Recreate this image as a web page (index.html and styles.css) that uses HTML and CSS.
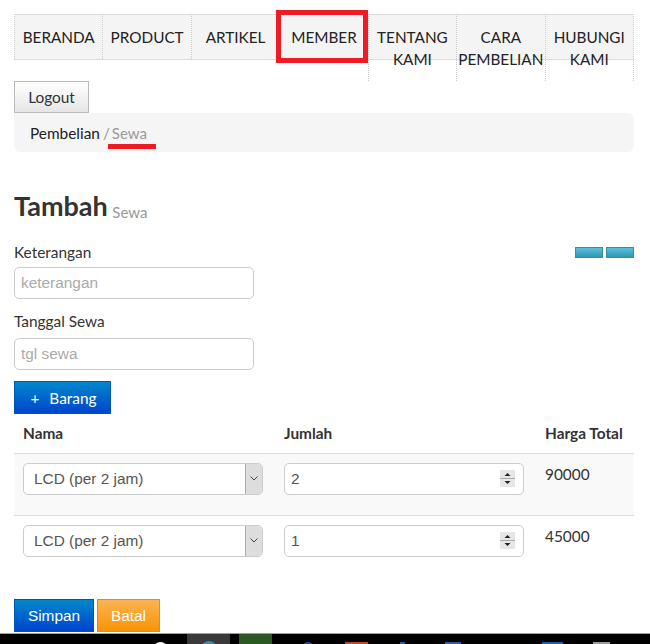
FILE: index.html
```html
<!DOCTYPE html>
<html lang="id">
<head>
    <meta charset="UTF-8">
    <meta name="viewport" content="width=device-width, initial-scale=1.0">
    <title>Tambah Sewa</title>
    <link rel="stylesheet" href="styles.css">
</head>
<body>

    <div class="page">
        <ul class="menu">
            <li><a href="#">BERANDA</a></li>
            <li><a href="#">PRODUCT</a></li>
            <li><a href="#">ARTIKEL</a></li>
            <li class="menu-marked"><a href="#">MEMBER</a></li>
            <li><a href="#">TENTANG KAMI</a></li>
            <li><a href="#">CARA PEMBELIAN</a></li>
            <li><a href="#">HUBUNGI KAMI</a></li>
        </ul>

        <button class="btn btn-logout">Logout</button>

        <div class="breadcrumb">
            <a href="#">Pembelian</a> <span class="divider">/</span> <span class="crumb-active">Sewa</span>
        </div>

        <h1>Tambah <small>Sewa</small></h1>

        <div class="form-top">
            <div class="fields">
                <label for="keterangan">Keterangan</label>
                <input class="text-input" id="keterangan" type="text" placeholder="keterangan">
                <label for="tgl">Tanggal Sewa</label>
                <input class="text-input" id="tgl" type="text" placeholder="tgl sewa">
            </div>
            <div class="mini-buttons">
                <button class="btn-mini"></button>
                <button class="btn-mini"></button>
            </div>
        </div>

        <button class="btn btn-blue btn-barang"><span class="plus">+</span> Barang</button>

        <table class="items">
            <thead>
                <tr>
                    <th class="col-nama">Nama</th>
                    <th class="col-jumlah">Jumlah</th>
                    <th>Harga Total</th>
                </tr>
            </thead>
            <tbody>
                <tr class="row-odd">
                    <td>
                        <div class="select-box">
                            <select><option>LCD (per 2 jam)</option></select>
                            <span class="select-arrow">
                                <svg width="8" height="5" viewBox="0 0 8 5"><path d="M0.5 0.5 L4 4 L7.5 0.5" fill="none" stroke="#444" stroke-width="1"/></svg>
                            </span>
                        </div>
                    </td>
                    <td>
                        <div class="number-box">
                            <input type="text" value="2">
                            <svg class="spin" width="15" height="17" viewBox="0 0 15 17">
                                <rect width="15" height="17" fill="#e6e6e6"/>
                                <rect y="8" width="15" height="1" fill="#aaa"/>
                                <path d="M7.5 3 L10.5 6 H4.5 Z M7.5 14 L10.5 11 H4.5 Z" fill="#222"/>
                            </svg>
                        </div>
                    </td>
                    <td class="total">90000</td>
                </tr>
                <tr>
                    <td>
                        <div class="select-box">
                            <select><option>LCD (per 2 jam)</option></select>
                            <span class="select-arrow">
                                <svg width="8" height="5" viewBox="0 0 8 5"><path d="M0.5 0.5 L4 4 L7.5 0.5" fill="none" stroke="#444" stroke-width="1"/></svg>
                            </span>
                        </div>
                    </td>
                    <td>
                        <div class="number-box">
                            <input type="text" value="1">
                            <svg class="spin" width="15" height="17" viewBox="0 0 15 17">
                                <rect width="15" height="17" fill="#e6e6e6"/>
                                <rect y="8" width="15" height="1" fill="#aaa"/>
                                <path d="M7.5 3 L10.5 6 H4.5 Z M7.5 14 L10.5 11 H4.5 Z" fill="#222"/>
                            </svg>
                        </div>
                    </td>
                    <td class="total">45000</td>
                </tr>
            </tbody>
        </table>

        <div class="actions">
            <button class="btn btn-blue btn-simpan">Simpan</button>
            <button class="btn btn-orange">Batal</button>
        </div>
    </div>

    <div class="taskbar">
        <span class="task task-white"></span>
        <span class="task task-grey"><i></i></span>
        <span class="task task-green"></span>
        <span class="task task-blue-1"></span>
        <span class="task task-red"></span>
        <span class="task task-blue-2"></span>
        <span class="task task-blue-3"></span>
        <span class="task task-blue-4"></span>
        <span class="task task-silver"></span>
    </div>

</body>
</html>
```

FILE: styles.css
```css
:root {
    --text-color: #333;
    --muted-color: #999;
    --line-color: #ddd;
    --input-border: #ccc;
    --mark-color: #ed1c24;
}

* {
    box-sizing: border-box;
}

html, body {
    height: 100%;
}

body {
    margin: 0;
    font-family: Lato, sans-serif;
    font-size: 15.4px;
    line-height: 22px;
    color: var(--text-color);
    background-color: #fff;
    overflow: hidden;
}

.page {
    height: 633px;
    padding: 14px 16px 0 14px;
}

/* menu */
.menu {
    list-style: none;
    margin: 0;
    padding: 0;
    display: flex;
    align-items: flex-start;
    height: 46px;
    background-color: #f4f4f4;
    border-top: 1px solid var(--line-color);
    border-bottom: 1px solid var(--line-color);
}

.menu li {
    position: relative;
    flex: 1 1 0;
    min-width: 0;
    margin-top: -1px;
    padding: 12px 0 11px;
    text-align: center;
    border-left: 1px dotted #ccc;
}

.menu li:last-child {
    border-right: 1px dotted #ccc;
}

.menu a {
    display: block;
    color: #222;
    font-size: 15.3px;
    text-decoration: none;
}

.menu-marked::after {
    content: "";
    position: absolute;
    left: -4px;
    right: 0;
    top: -4px;
    box-sizing: border-box;
    height: 53px;
    border: 5px solid var(--mark-color);
}

/* buttons */
.btn {
    display: block;
    height: 33px;
    padding: 0 13px;
    font-family: Lato, sans-serif;
    font-size: 15.4px;
    border: 1px solid #bbb;
    border-radius: 0;
    cursor: pointer;
}

.btn-logout {
    width: 75px;
    height: 32px;
    margin-top: 21px;
    color: #333;
    background: linear-gradient(#fff, #e6e6e6);
}

.btn-blue {
    color: #fff;
    border-color: #0055b0;
    background: linear-gradient(#0088cc, #0044cc);
}

.btn-orange {
    color: #fff;
    border-color: #e38d13;
    background: linear-gradient(#fbb450, #f89406);
    width: 63px;
}

.btn-barang {
    width: 97px;
    margin-top: 11px;
    padding: 0 12px 0 14px;
}

.plus {
    margin-right: 6px;
}

.btn-simpan {
    width: 80px;
}

.actions .btn {
    font-family: "Liberation Sans", Arial, sans-serif;
    padding: 0;
}

.btn-mini {
    display: block;
    width: 28px;
    height: 11px;
    padding: 0;
    border: 1px solid #3b8ba5;
    background: linear-gradient(#5bc0de, #2f96b4);
}

/* breadcrumb */
.breadcrumb {
    position: relative;
    height: 39px;
    padding: 9px 16px;
    background-color: #f5f5f5;
    border-radius: 0 6px 6px 6px;
}

.breadcrumb a {
    color: #222;
    text-decoration: none;
}

.divider,
.crumb-active {
    color: var(--muted-color);
}

.divider {
    margin: 0 -2px 0 -1px;
}

.crumb-active {
    font-size: 15px;
}

.crumb-active::after {
    content: "";
    position: absolute;
    left: 94px;
    top: 31px;
    width: 48px;
    height: 5px;
    background-color: var(--mark-color);
}

h1 {
    margin: 34px 0 0;
    font-size: 27px;
    line-height: 40px;
    font-weight: 700;
}

h1 small {
    margin-left: -2px;
    font-size: 15px;
    line-height: 1;
    font-weight: 400;
    color: var(--muted-color);
    vertical-align: -2px;
}

/* form */
.form-top {
    display: flex;
    justify-content: space-between;
    margin-top: 15px;
}

.fields {
    display: flex;
    flex-direction: column;
    width: 240px;
}

.fields label {
    height: 26px;
}

.fields label + input + label {
    height: 23px;
    margin-top: 11px;
    margin-bottom: 5px;
}

.text-input {
    width: 240px;
    height: 32px;
    padding: 0 6px;
    font-family: "Liberation Sans", Arial, sans-serif;
    font-size: 15.4px;
    color: #555;
    background-color: #fff;
    border: 1px solid var(--input-border);
    border-radius: 5px;
}

.text-input::placeholder {
    color: #aaa;
    opacity: 1;
}

.mini-buttons {
    display: flex;
    gap: 3px;
    margin-top: 6px;
}

/* table */
.items {
    width: 620px;
    border-collapse: collapse;
    table-layout: fixed;
}

.items th {
    height: 39px;
    padding: 0 9px;
    text-align: left;
    font-size: 15.4px;
    font-weight: 700;
    white-space: nowrap;
}

.items td {
    height: 62px;
    padding: 9px 9px 0;
    vertical-align: top;
    border-top: 1px solid var(--line-color);
}

.col-nama,
.col-jumlah {
    width: 261px;
}

.row-odd td {
    background-color: #f9f9f9;
}

.select-box,
.number-box {
    display: flex;
    align-items: center;
    width: 240px;
    height: 32px;
    background-color: #fff;
    border: 1px solid var(--input-border);
    border-radius: 5px;
    overflow: hidden;
}

.select-box select {
    flex: 1;
    min-width: 0;
    height: 100%;
    padding: 0 10px;
    font-family: "Liberation Sans", Arial, sans-serif;
    font-size: 15.4px;
    color: #555;
    background: none;
    border: 0;
    appearance: none;
}

.select-arrow {
    display: flex;
    align-items: center;
    justify-content: center;
    width: 17px;
    height: 100%;
    background-color: #ddd;
    border-left: 1px solid #aaa;
}

.number-box input {
    flex: 1;
    min-width: 0;
    padding: 0 6px;
    font-family: "Liberation Sans", Arial, sans-serif;
    font-size: 15.4px;
    color: #555;
    background: none;
    border: 0;
}

.spin {
    margin-right: 8px;
}

.actions {
    display: flex;
    gap: 3px;
    margin-top: 22px;
}

/* windows taskbar at the bottom of the shot */
.taskbar {
    display: flex;
    align-items: flex-start;
    height: 11px;
    background-color: #000;
    border-top: 1px solid #6fb1c9;
    overflow: hidden;
}

.task {
    display: block;
    flex: none;
}

.task-white {
    width: 15px;
    height: 15px;
    margin: 8px 0 0 153px;
    border-radius: 50%;
    background-color: #fff;
}

.task-grey {
    width: 43px;
    height: 10px;
    margin-left: 19px;
    background-color: #3a3a3a;
}

.task-grey i {
    display: block;
    width: 16px;
    height: 16px;
    margin: 7px auto 0;
    border-radius: 50%;
    background-color: #2f8fb0;
}

.task-green {
    width: 33px;
    height: 10px;
    margin-left: 9px;
    background-color: #2a5a22;
}

.task-blue-1 {
    width: 10px;
    height: 10px;
    margin: 8px 0 0 31px;
    border-radius: 50%;
    background-color: #1d4e9a;
}

.task-red {
    width: 23px;
    height: 10px;
    margin: 8px 0 0 32px;
    background-color: #c8452a;
}

.task-blue-2 {
    width: 5px;
    height: 8px;
    margin: 8px 0 0 32px;
    background-color: #1d5ba8;
}

.task-blue-3 {
    width: 16px;
    height: 8px;
    margin: 8px 0 0 40px;
    background-color: #2f5f9f;
}

.task-blue-4 {
    width: 21px;
    height: 10px;
    margin: 8px 0 0 81px;
    background-color: #1c5fb0;
}

.task-silver {
    width: 17px;
    height: 8px;
    margin: 8px 0 0 30px;
    background-color: #9a9a9a;
}
```
